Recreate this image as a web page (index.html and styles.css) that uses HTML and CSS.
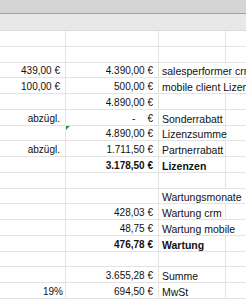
FILE: index.html
```html
<!DOCTYPE html>
<html lang="de">
<head>
<meta charset="utf-8">
<title>Kalkulation</title>
<link rel="stylesheet" href="styles.css">
</head>
<body>
<div class="sheet">
  <div class="bar-top"></div>
  <div class="bar-sub"></div>
  <div class="grid">
    <div class="row"><div class="c a"></div><div class="c b"></div><div class="c t"></div><div class="c d"></div></div>
    <div class="row"><div class="c a"></div><div class="c b"></div><div class="c t"></div><div class="c d"></div></div>
    <div class="row"><div class="c a num">439,00 €</div><div class="c b num">4.390,00 €</div><div class="c t wide">salesperformer crm</div></div>
    <div class="row"><div class="c a num">100,00 €</div><div class="c b num">500,00 €</div><div class="c t wide">mobile client Lizenzen</div></div>
    <div class="row"><div class="c a"></div><div class="c b num">4.890,00 €</div><div class="c t"></div><div class="c d"></div></div>
    <div class="row"><div class="c a num">abzügl.</div><div class="c b num"><span class="dash">-</span>€</div><div class="c t">Sonderrabatt</div><div class="c d"></div></div>
    <div class="row"><div class="c a"></div><div class="c b num flag">4.890,00 €</div><div class="c t">Lizenzsumme</div><div class="c d"></div></div>
    <div class="row"><div class="c a num">abzügl.</div><div class="c b num">1.711,50 €</div><div class="c t">Partnerrabatt</div><div class="c d"></div></div>
    <div class="row"><div class="c a"></div><div class="c b num strong">3.178,50 €</div><div class="c t strong">Lizenzen</div><div class="c d"></div></div>
    <div class="row"><div class="c a"></div><div class="c b"></div><div class="c t"></div><div class="c d"></div></div>
    <div class="row"><div class="c a"></div><div class="c b"></div><div class="c t wide">Wartungsmonate</div></div>
    <div class="row"><div class="c a"></div><div class="c b num">428,03 €</div><div class="c t">Wartung crm</div><div class="c d"></div></div>
    <div class="row"><div class="c a"></div><div class="c b num">48,75 €</div><div class="c t wide">Wartung mobile</div></div>
    <div class="row"><div class="c a"></div><div class="c b num strong">476,78 €</div><div class="c t strong">Wartung</div><div class="c d"></div></div>
    <div class="row"><div class="c a"></div><div class="c b"></div><div class="c t"></div><div class="c d"></div></div>
    <div class="row"><div class="c a"></div><div class="c b num">3.655,28 €</div><div class="c t">Summe</div><div class="c d"></div></div>
    <div class="row"><div class="c a num pct">19%</div><div class="c b num">694,50 €</div><div class="c t">MwSt</div><div class="c d"></div></div>
    <div class="row"><div class="c a"></div><div class="c b"></div><div class="c t"></div><div class="c d"></div></div>
  </div>
</div>
</body>
</html>
```

FILE: styles.css
```css
html, body {
  margin: 0;
  padding: 0;
  background: #ffffff;
}

.sheet {
  width: 246px;
  height: 299px;
  overflow: hidden;
  font-family: "Liberation Sans", Arial, sans-serif;
  color: #111111;
}

.bar-top {
  height: 13px;
  background: #d5d5d5;
  border-bottom: 1px solid #a2a2a2;
}

.bar-sub {
  height: 16px;
  background: #e8e8e8;
}

.grid {
  border-top: 1px solid #dadada;
}

.row {
  display: grid;
  grid-template-columns: 66px 93px 67px 1fr;
  height: 15.75px;
  box-sizing: border-box;
  border-bottom: 1px solid #e3e3e3;
}

.c {
  position: relative;
  display: flex;
  align-items: flex-end;
  border-right: 1px solid #e3e3e3;
  white-space: nowrap;
  overflow: visible;
  line-height: 12px;
  min-width: 0;
}

.d {
  border-right: none;
}

.num {
  justify-content: flex-end;
  font-size: 10px;
  padding-right: 5px;
}

.pct {
  padding-right: 2px;
}

.t {
  font-size: 10.5px;
  padding-left: 3px;
}

.wide {
  grid-column: span 2;
  border-right: none;
}

.strong {
  font-weight: bold;
}

.dash {
  margin-right: 12px;
}

.flag::before {
  content: "";
  position: absolute;
  left: 0;
  top: 0;
  width: 0;
  height: 0;
  border-top: 4px solid #2b9640;
  border-right: 4px solid transparent;
}
```
